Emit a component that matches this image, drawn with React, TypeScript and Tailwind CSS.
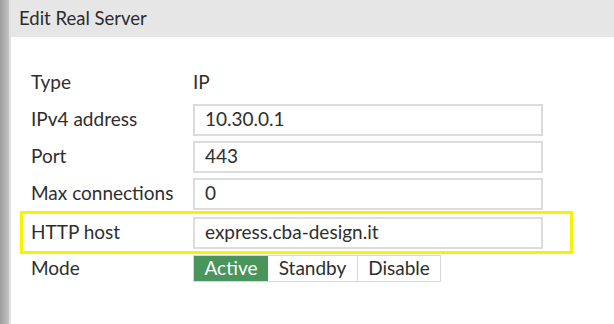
import React from "react"

const rows = [
    {label: "IPv4 address", value: "10.30.0.1"},
    {label: "Port", value: "443"},
    {label: "Max connections", value: "0"},
]

function Field({label, value}: {label: string, value: string}) {
    return <div className="flex items-center h-[37px]">
        <div className="w-[182px] pl-[20px]">{label}</div>
        <div className="w-[350px] h-[32px] border-2 border-[#dcdcdc] flex items-center pl-[10px]">{value}</div>
    </div>
}

export default function App() {
    return <div className="flex w-[614px] h-[324px] overflow-hidden bg-white text-[#2e2e2e] text-[19px]"
                style={{fontFamily: "Lato, 'Noto Sans', sans-serif"}}>
        <div className="w-[9px] bg-gradient-to-r from-[#9c9c9c] to-[#c4c4c4]"/>
        <div className="w-[2px] bg-[#e2e2e2]"/>
        <div className="flex-grow flex flex-col">
            <div className="h-[37px] bg-[#e6e6e6] flex items-center pl-[8px] text-[18.5px] text-[#2c2c2c]">
                Edit Real Server
            </div>
            <div className="flex flex-col pt-[27px]">
                <div className="flex items-center h-[37px]">
                    <div className="w-[182px] pl-[20px]">Type</div>
                    <div>IP</div>
                </div>
                {rows.map(r => <Field key={r.label} label={r.label} value={r.value}/>)}
                <div className="ml-[9px] w-[553px] border-[3px] border-[#f7f300] -my-[1px] h-[43px] flex items-center">
                    <div className="w-[170px] pl-[8px]">HTTP host</div>
                    <div className="w-[350px] h-[32px] border-2 border-[#dcdcdc] flex items-center pl-[10px]">
                        express.cba-design.it
                    </div>
                </div>
                <div className="flex items-center h-[31px]">
                    <div className="w-[182px] pl-[20px]">Mode</div>
                    <div className="flex h-[27px] border border-[#d8d8d8]">
                        <div className="w-[74px] bg-[#4a955c] text-white flex items-center justify-center">Active</div>
                        <div className="w-[90px] border-r border-[#d8d8d8] flex items-center justify-center">Standby</div>
                        <div className="w-[82px] flex items-center justify-center">Disable</div>
                    </div>
                </div>
            </div>
        </div>
    </div>
}
